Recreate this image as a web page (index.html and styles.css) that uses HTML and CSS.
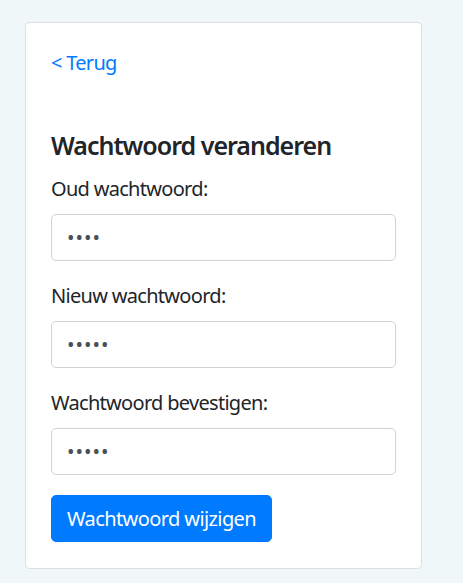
FILE: index.html
```html
<!DOCTYPE html>
<html lang="nl">
<head>
<meta charset="utf-8">
<title>Wachtwoord veranderen</title>
<link rel="stylesheet" href="styles.css">
</head>
<body>
<div class="page">
  <div class="card">
    <a class="back" href="#">&lt; Terug</a>
    <h5 class="title">Wachtwoord veranderen</h5>
    <form class="form">
      <div class="group">
        <label class="label" for="old">Oud wachtwoord:</label>
        <input class="control" id="old" type="password" value="1234">
      </div>
      <div class="group">
        <label class="label" for="new">Nieuw wachtwoord:</label>
        <input class="control" id="new" type="password" value="12345">
      </div>
      <div class="group">
        <label class="label" for="confirm">Wachtwoord bevestigen:</label>
        <input class="control" id="confirm" type="password" value="12345">
      </div>
      <button class="btn" type="button">Wachtwoord wijzigen</button>
    </form>
  </div>
</div>
</body>
</html>
```

FILE: styles.css
```css
* { box-sizing: border-box; }
html, body { margin: 0; padding: 0; }
body {
  background: #f0f7f9;
  font-family: "Noto Sans", "Open Sans", sans-serif;
  font-size: 20px;
  line-height: 30px;
  letter-spacing: -0.035em;
  color: #212529;
  width: 463px;
  height: 583px;
  overflow: hidden;
}
.page {
  padding: 22px 0 0 25px;
}
.card {
  width: 397px;
  background: #fff;
  border: 1px solid rgba(0,0,0,.125);
  border-radius: 5px;
  padding: 25px 25px 26px;
  display: flex;
  flex-direction: column;
}
.back {
  color: #007bff;
  text-decoration: none;
  display: block;
  margin-bottom: 52px;
}
.title {
  margin: 0 0 14px;
  font-size: 25px;
  line-height: 30px;
  font-weight: 600;
  letter-spacing: -0.04em;
}
.form { margin: 0; }
.group { margin-bottom: 20px; display: flex; flex-direction: column; }
.label { display: block; margin-bottom: 10px; }
.control {
  display: block;
  width: 100%;
  height: 47px;
  padding: 7.5px 15px;
  font-family: inherit;
  font-size: 20px;
  line-height: 30px;
  color: #495057;
  background: #fff;
  border: 1px solid #ced4da;
  border-radius: 5px;
  letter-spacing: 1px;
  outline: none;
}
.btn {
  align-self: flex-start;
  height: 47px;
  padding: 7.5px 15px;
  font-family: inherit;
  font-size: 20px;
  line-height: 30px;
  letter-spacing: -0.03em;
  color: #fff;
  background: #007bff;
  border: 1px solid #007bff;
  border-radius: 5px;
}
```
